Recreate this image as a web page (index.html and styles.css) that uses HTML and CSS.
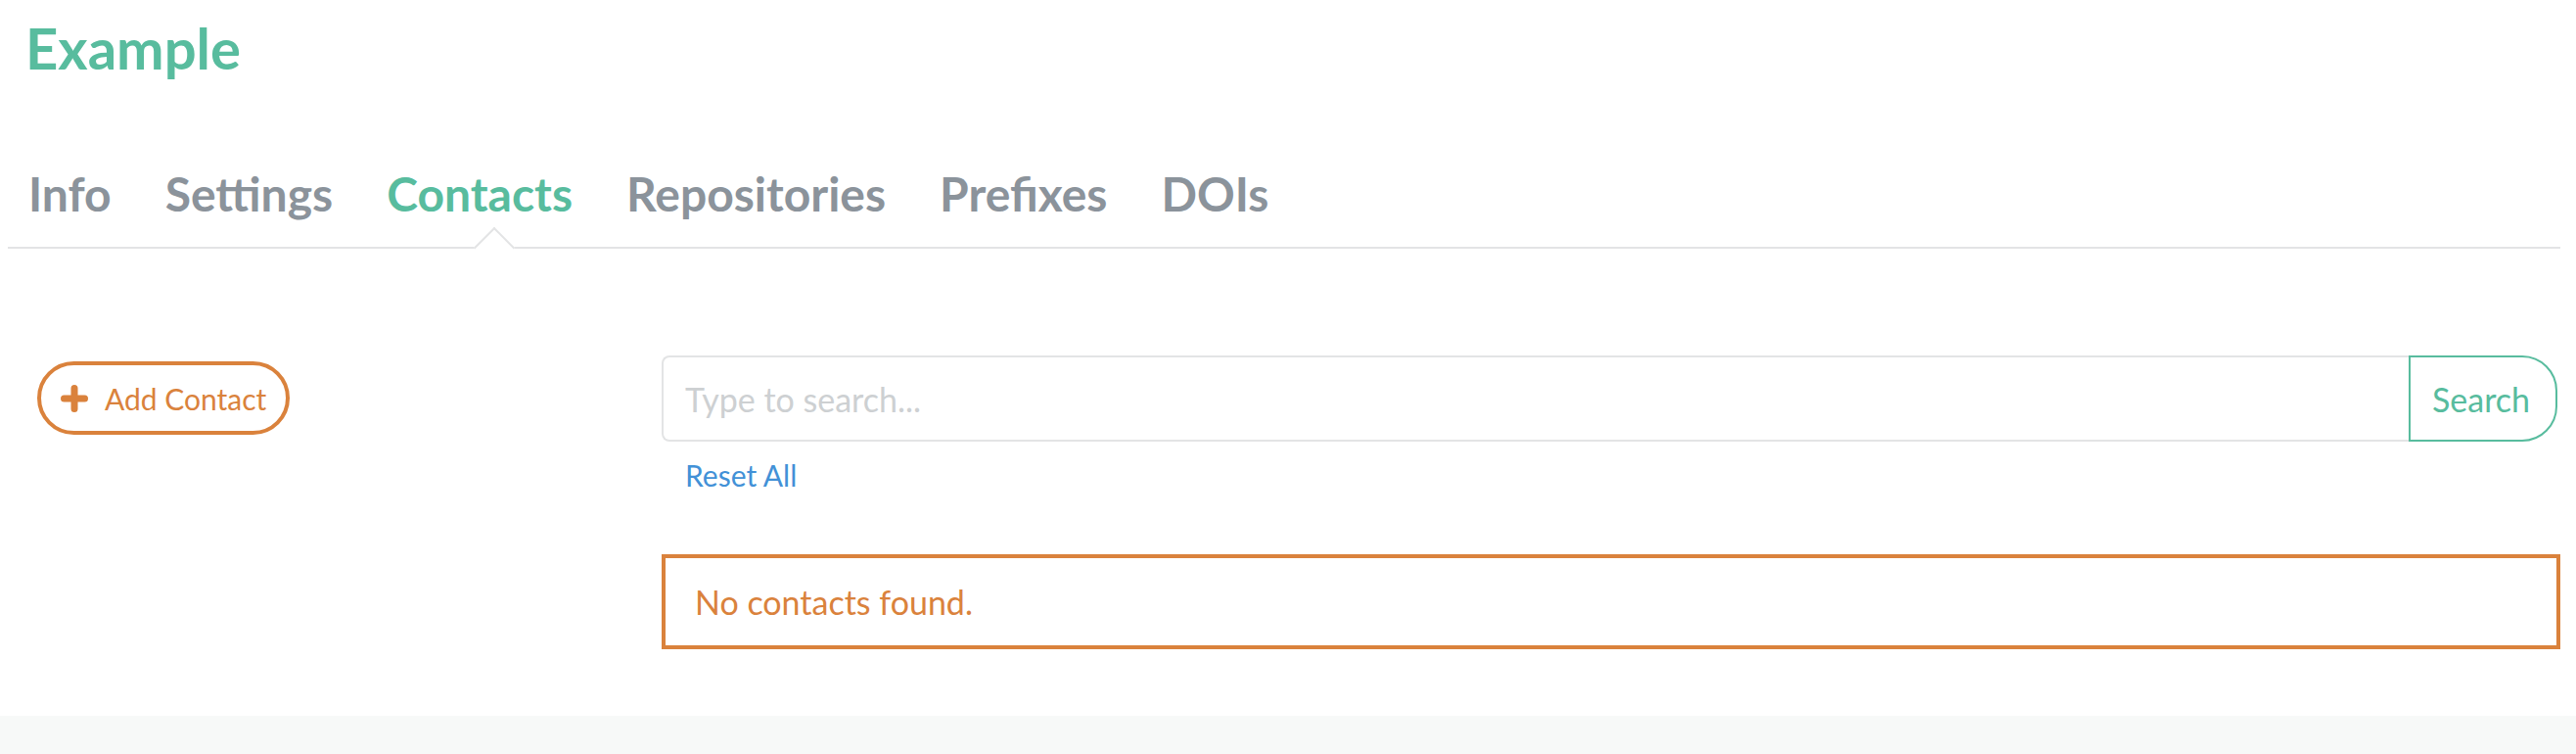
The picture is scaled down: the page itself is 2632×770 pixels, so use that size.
FILE: index.html
```html
<!DOCTYPE html>
<html lang="en">
<head>
<meta charset="utf-8">
<title>Example - Contacts</title>
<link rel="stylesheet" href="styles.css">
</head>
<body>
<div class="page">
  <header class="header">
    <h1 class="title">Example</h1>
  </header>
  <nav class="tabs">
    <a class="tab" href="#">Info</a>
    <a class="tab" href="#">Settings</a>
    <a class="tab tab-active" href="#">Contacts</a>
    <a class="tab" href="#">Repositories</a>
    <a class="tab" href="#">Prefixes</a>
    <a class="tab" href="#">DOIs</a>
  </nav>
  <main class="content">
    <aside class="side">
      <button class="btn-add" type="button">
        <svg class="plus" width="28" height="28" viewBox="0 0 28 28" aria-hidden="true">
          <path d="M3.5 14H24.5M14 3.5V24.5" stroke="currentColor" stroke-width="7" stroke-linecap="round" fill="none"/>
        </svg>
        <span>Add Contact</span>
      </button>
    </aside>
    <section class="results">
      <form class="search">
        <input class="search-input" type="text" placeholder="Type to search...">
        <button class="search-btn" type="button">Search</button>
      </form>
      <a class="reset" href="#">Reset All</a>
      <div class="alert">No contacts found.</div>
    </section>
  </main>
</div>
<footer class="footer"></footer>
</body>
</html>
```

FILE: styles.css
```css
html, body {
  margin: 0;
  padding: 0;
  background: #ffffff;
  font-family: Lato, "Open Sans", sans-serif;
}

.page {
  padding: 0 16px 0 8px;
}

.header {
  padding: 20px 0 0 18px;
}

.title {
  margin: 0;
  font-size: 58px;
  line-height: 1;
  font-weight: 700;
  color: #58bc9e;
}

.tabs {
  display: flex;
  margin-top: 96px;
  padding-left: 21px;
  border-bottom: 2px solid #e3e4e5;
}

.tab {
  position: relative;
  padding: 0 30px 30px 0;
  margin-right: 25px;
  font-size: 48px;
  line-height: 1;
  font-weight: 700;
  color: #8b939b;
  text-decoration: none;
}

.tab-active {
  color: #58bc9e;
}

.tab-active::after {
  content: "";
  position: absolute;
  left: 50%;
  bottom: -16px;
  width: 30px;
  height: 30px;
  box-sizing: border-box;
  background: #ffffff;
  border-top: 2px solid #e3e4e5;
  border-left: 2px solid #e3e4e5;
  transform: translateX(-50%) rotate(45deg);
}

.content {
  display: grid;
  grid-template-columns: 638px 1fr;
  padding: 109px 0 68px 30px;
  align-items: start;
}

.btn-add {
  display: flex;
  align-items: center;
  gap: 17px;
  margin-top: 6px;
  height: 75px;
  padding: 0 20px 0 20px;
  box-sizing: border-box;
  border: 4px solid #da823c;
  border-radius: 40px;
  background: #ffffff;
  color: #da823c;
  font-family: Lato, "Open Sans", sans-serif;
  font-size: 30px;
  line-height: 1;
  cursor: pointer;
}

.plus {
  display: block;
  flex: none;
}

.results {
  display: flex;
  flex-direction: column;
  align-items: stretch;
}

.search {
  display: flex;
  margin: 0 3px 0 0;
  height: 88px;
}

.search-input {
  flex: 1;
  min-width: 0;
  box-sizing: border-box;
  height: 88px;
  padding: 0 22px;
  border: 2px solid #e3e4e5;
  border-right: none;
  border-radius: 8px 0 0 8px;
  font-family: Lato, "Open Sans", sans-serif;
  font-size: 34px;
  color: #555;
  outline: none;
}

.search-input::placeholder {
  color: #cdd0d2;
}

.search-btn {
  width: 152px;
  height: 88px;
  box-sizing: border-box;
  border: 2px solid #58bc9e;
  border-radius: 0 36px 36px 0;
  background: #ffffff;
  color: #58bc9e;
  font-family: Lato, "Open Sans", sans-serif;
  font-size: 34px;
  padding: 0 4px 0 0;
  cursor: pointer;
}

.reset {
  align-self: flex-start;
  margin: 16px 0 0 24px;
  font-size: 30px;
  line-height: 36px;
  color: #4291d7;
  text-decoration: none;
}

.alert {
  display: flex;
  align-items: center;
  margin-top: 63px;
  height: 97px;
  box-sizing: border-box;
  padding: 0 30px;
  border: 4px solid #da823c;
  color: #da823c;
  font-size: 34px;
}

.footer {
  height: 60px;
  background: #f7f9f8;
}
```
